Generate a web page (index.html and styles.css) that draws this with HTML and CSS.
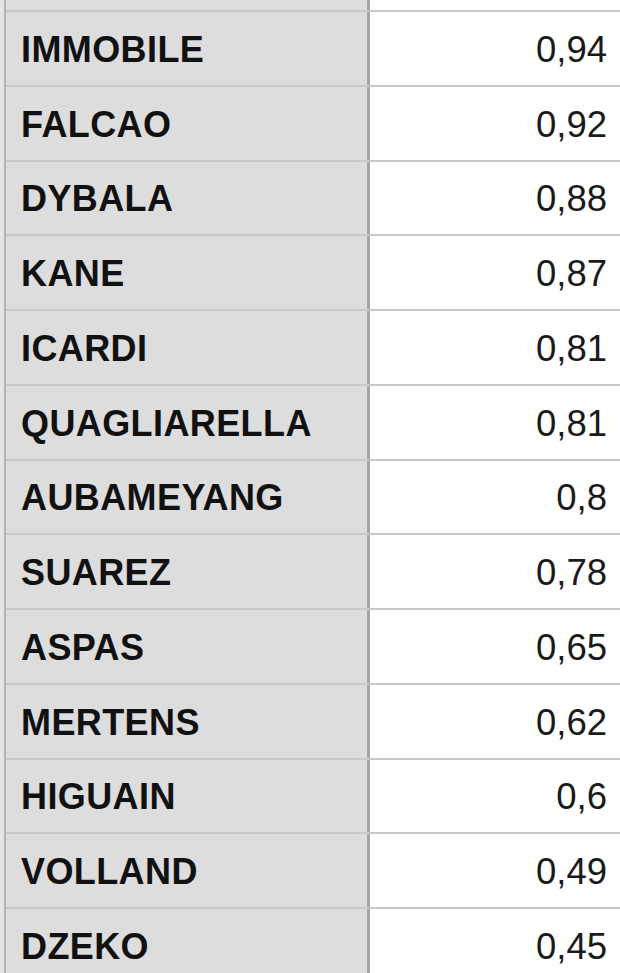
FILE: index.html
```html
<!DOCTYPE html>
<html>
<head>
<meta charset="utf-8">
<link rel="stylesheet" href="styles.css">
</head>
<body>
<div class="sheet">
  <div class="row top"><div class="name"></div><div class="val"></div></div>
  <div class="row"><div class="name">IMMOBILE</div><div class="val">0,94</div></div>
  <div class="row"><div class="name">FALCAO</div><div class="val">0,92</div></div>
  <div class="row"><div class="name">DYBALA</div><div class="val">0,88</div></div>
  <div class="row"><div class="name">KANE</div><div class="val">0,87</div></div>
  <div class="row"><div class="name">ICARDI</div><div class="val">0,81</div></div>
  <div class="row"><div class="name">QUAGLIARELLA</div><div class="val">0,81</div></div>
  <div class="row"><div class="name">AUBAMEYANG</div><div class="val">0,8</div></div>
  <div class="row"><div class="name">SUAREZ</div><div class="val">0,78</div></div>
  <div class="row"><div class="name">ASPAS</div><div class="val">0,65</div></div>
  <div class="row"><div class="name">MERTENS</div><div class="val">0,62</div></div>
  <div class="row"><div class="name">HIGUAIN</div><div class="val">0,6</div></div>
  <div class="row"><div class="name">VOLLAND</div><div class="val">0,49</div></div>
  <div class="row"><div class="name">DZEKO</div><div class="val">0,45</div></div>
</div>
</body>
</html>
```
FILE: styles.css
```css
html, body {
  margin: 0;
  padding: 0;
  background: #ffffff;
  overflow: hidden;
}
.sheet {
  width: 620px;
  height: 973px;
  overflow: hidden;
  background: linear-gradient(to right, #e4e4e4 0, #e4e4e4 4px, #b4b4b4 4px, #b4b4b4 6px, transparent 6px);
  padding-left: 6px;
  box-sizing: border-box;
  font-family: "Liberation Sans", Arial, Helvetica, sans-serif;
}
.row {
  display: grid;
  grid-template-columns: 364px 1fr;
  height: 74.75px;
  box-sizing: border-box;
  border-top: 2px solid #c8c8c8;
}
.row.top {
  height: 10px;
  border-top: none;
}
.name {
  background: #dddddd;
  border-right: 3px solid #a6a6a6;
  display: flex;
  align-items: center;
  padding-left: 15px;
  padding-top: 3px;
  font-weight: bold;
  font-size: 36px;
  letter-spacing: 0.4px;
  color: #111111;
}
.val {
  display: flex;
  align-items: center;
  justify-content: flex-end;
  padding-right: 13px;
  padding-top: 3px;
  font-size: 36.5px;
  color: #1a1a1a;
}
```
